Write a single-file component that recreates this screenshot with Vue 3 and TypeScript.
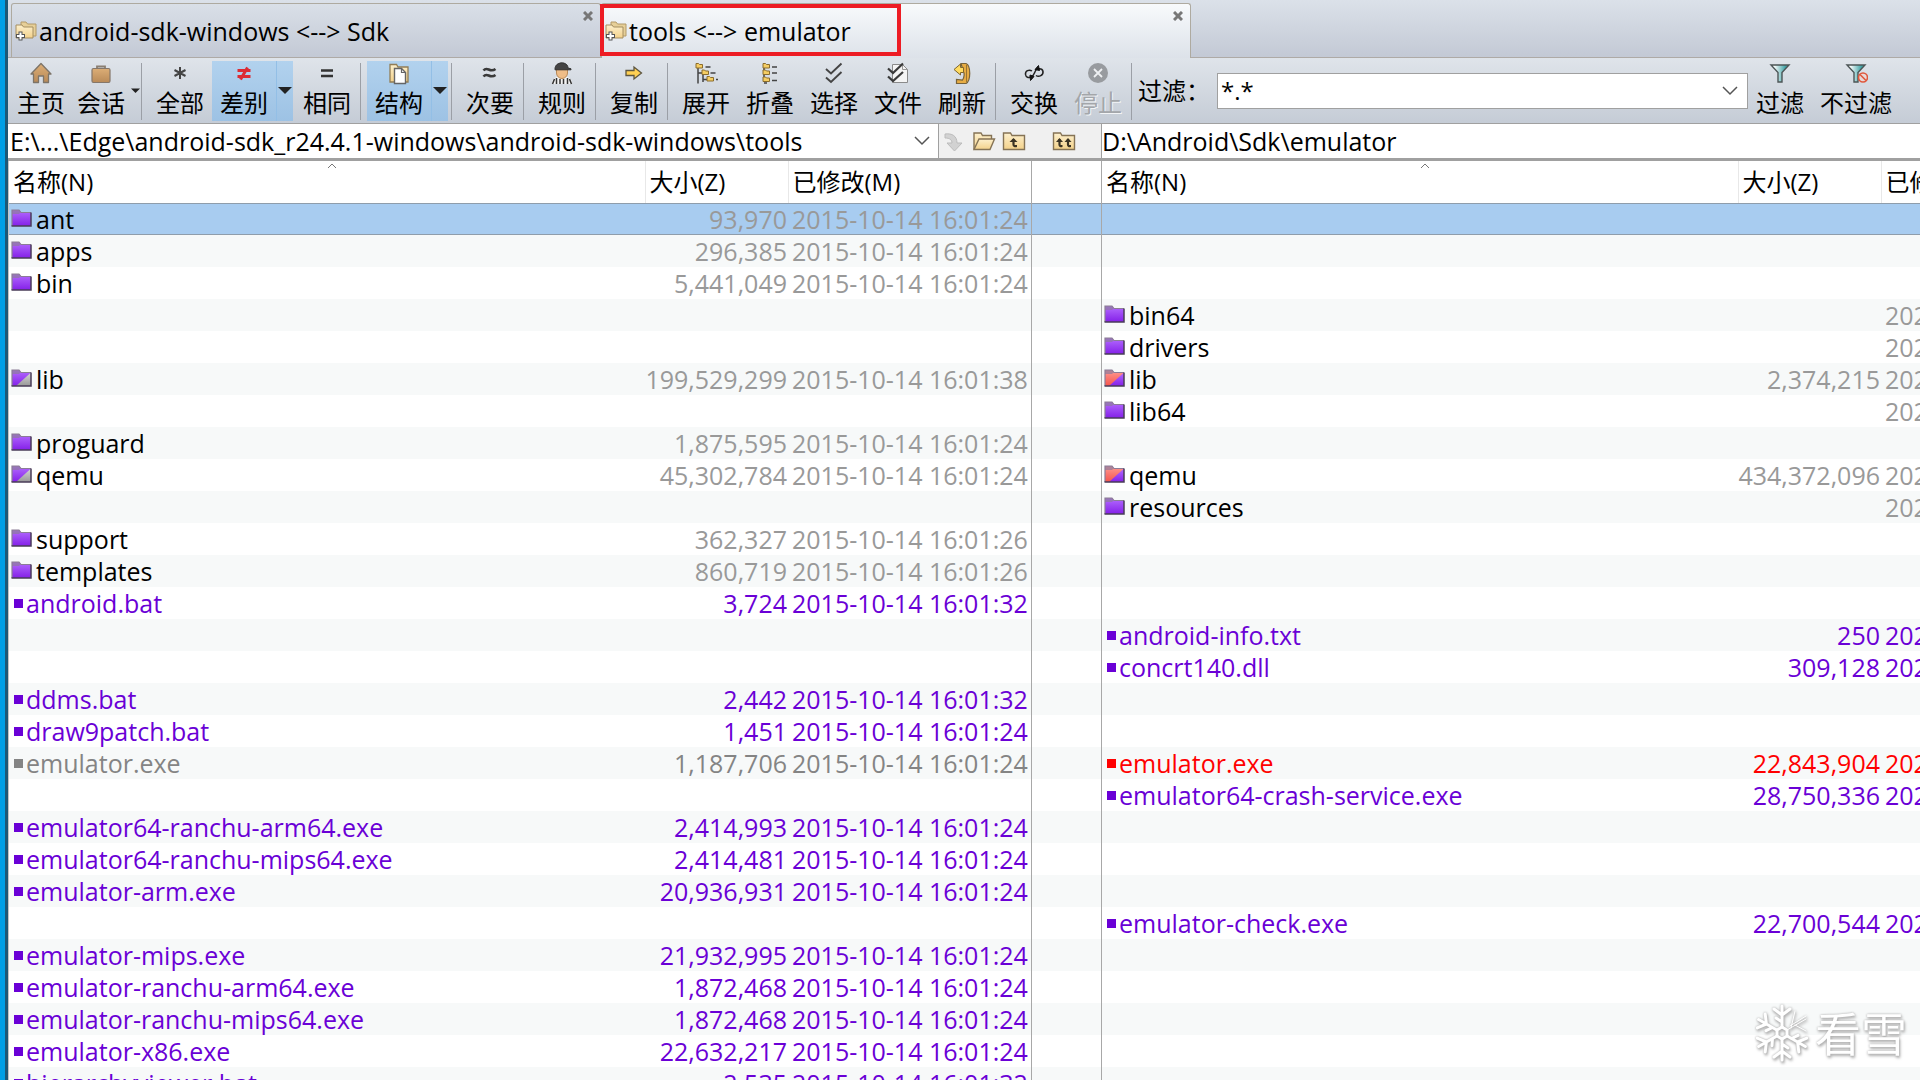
<script setup lang="ts">
import { ref } from 'vue'

type Kind = 'folder' | 'folder-gray' | 'folder-red' | 'file'
interface Entry {
  name: string
  kind: Kind
  tone: 'dir' | 'only' | 'old' | 'new'
  size?: string
  date: string
}
interface Row {
  left?: Entry
  right?: Entry
}
interface Tool {
  label: string
  icon: string
  active?: boolean
  arrow?: boolean
  disabled?: boolean
  compact?: boolean
}

const dir = (name: string, date: string, size?: string, kind: Kind = 'folder'): Entry => ({ name, kind, tone: 'dir', size, date })
const file = (name: string, size: string, date: string, tone: Entry['tone'] = 'only'): Entry => ({ name, kind: 'file', tone, size, date })

const t24 = '2015-10-14 16:01:24'
const t26 = '2015-10-14 16:01:26'
const t32 = '2015-10-14 16:01:32'
const t38 = '2015-10-14 16:01:38'

const rows: Row[] = [
  { left: dir('ant', t24, '93,970') },
  { left: dir('apps', t24, '296,385') },
  { left: dir('bin', t24, '5,441,049') },
  { right: dir('bin64', '202') },
  { right: dir('drivers', '202') },
  { left: dir('lib', t38, '199,529,299', 'folder-gray'), right: dir('lib', '202', '2,374,215', 'folder-red') },
  { right: dir('lib64', '202') },
  { left: dir('proguard', t24, '1,875,595') },
  { left: dir('qemu', t24, '45,302,784', 'folder-gray'), right: dir('qemu', '202', '434,372,096', 'folder-red') },
  { right: dir('resources', '202') },
  { left: dir('support', t26, '362,327') },
  { left: dir('templates', t26, '860,719') },
  { left: file('android.bat', '3,724', t32) },
  { right: file('android-info.txt', '250', '202') },
  { right: file('concrt140.dll', '309,128', '202') },
  { left: file('ddms.bat', '2,442', t32) },
  { left: file('draw9patch.bat', '1,451', t24) },
  { left: file('emulator.exe', '1,187,706', t24, 'old'), right: file('emulator.exe', '22,843,904', '202', 'new') },
  { right: file('emulator64-crash-service.exe', '28,750,336', '202') },
  { left: file('emulator64-ranchu-arm64.exe', '2,414,993', t24) },
  { left: file('emulator64-ranchu-mips64.exe', '2,414,481', t24) },
  { left: file('emulator-arm.exe', '20,936,931', t24) },
  { right: file('emulator-check.exe', '22,700,544', '202') },
  { left: file('emulator-mips.exe', '21,932,995', t24) },
  { left: file('emulator-ranchu-arm64.exe', '1,872,468', t24) },
  { left: file('emulator-ranchu-mips64.exe', '1,872,468', t24) },
  { left: file('emulator-x86.exe', '22,632,217', t24) },
  { left: file('hierarchyviewer.bat', '2,535', t32) },
]

const icons: Record<string, string> = {
  home: '<path d="M12 2.500 22 13h-2.500v8.500H14.500V15h-5v6.500H4.500V13H2z" fill="url(#brown)" stroke="#7d7468" stroke-width="1.300" stroke-linejoin="round"/>',
  bag: '<path d="M8 8V5.500h8V8" fill="none" stroke="#8a7f72" stroke-width="1.800"/><rect x="3" y="7.500" width="18" height="14" rx="1.500" fill="url(#brown)" stroke="#85776a" stroke-width="1.200"/>',
  all: '<path d="M12 6v12M6.500 9l11 6M17.500 9l-11 6" stroke="#444" stroke-width="2"/>',
  diff: '<path d="M5.500 9.500h13M5.500 15.500h13M15.500 6.500l-7 12" stroke="#dc2b33" stroke-width="3"/>',
  same: '<path d="M6 9.500h12M6 15h12" stroke="#333" stroke-width="2.600"/>',
  struct: '<path d="M3 21V3.500h6.500L11 6h10v15z" fill="url(#cream)" stroke="#927d55" stroke-width="1.300"/><path d="M7.500 7.500h7l4 4v11h-11z" fill="#fff" stroke="#666" stroke-width="1.400"/><path d="M14.500 7.500v4h4" fill="none" stroke="#666" stroke-width="1.200"/>',
  minor: '<path d="M5.500 9.500c4-5 6 3 12-1.500M5.500 15.500c4-5 6 3 12-1.500" fill="none" stroke="#3a3a3a" stroke-width="2.600"/>',
  rules: '<path d="M2 23c0-5 3-7 6-7h8c3 0 6 2 6 7" fill="#f4f4f4"/><path d="M2.500 23l2-5M6.500 23v-6M10 23v-5M13.500 23v-5M17.500 23v-6M21.500 23l-2-5" stroke="#333" stroke-width="1.500"/><path d="M6.500 8h11v4c0 3-2.500 5.500-5.500 5.500S6.500 15 6.500 12z" fill="#efbd88" stroke="#b98a58"/><path d="M5 8c0-8 13-8 13-1l3 .8v1H5z" fill="#444" stroke="#333"/>',
  copy: '<path d="M4 9.500h8V6l7.500 6-7.500 6v-3.500H4z" fill="#ffd052" stroke="#5c5540" stroke-width="1.300"/>',
  expand: '<path d="M4 5v17.500M9 12v9M4 12h5M9 18.500h5M11.500 6h5M16.500 12h5M22 18.500h2" stroke="#444" stroke-width="1.500"/><g fill="#f5cd62" stroke="#8a6c2c"><path d="M2 2.500h2.500l1 1h3v3.500H2zM8 9h2.500l1 1h3v3.500H8zM13 15.500h2.500l1 1h3V20H13z"/></g>',
  collapse: '<path d="M6 5v16M6 22h3M14 6h5M14 12h5M14 19.500h5" stroke="#444" stroke-width="1.500"/><g fill="#f5cd62" stroke="#8a6c2c"><path d="M5 2.500h2.500l1 1h3v3.500H5zM5 9h2.500l1 1h3v3.500H5zM5 16h2.500l1 1h3v3.500H5z"/></g>',
  select: '<path d="M4 8l5 4.500L19.500 2.500M4 16.500l5 4.500 10.500-10" fill="none" stroke="#444" stroke-width="1.900"/>',
  files: '<path d="M6.500 3.500h10l5 5v13h-15z" fill="#f4f4f4" stroke="#8a8a8a"/><path d="M16.500 3.500v5h5" fill="none" stroke="#999"/><path d="M2 7.500l5 4.500L17 2.500M2 15.500l5 4.500 10-9" fill="none" stroke="#3a3a3a" stroke-width="2.200"/>',
  refresh: '<path d="M11 2.500h5c5 2 5 17 0 20H6.500v-4l6 .5c2-3 2-7 1-8z" fill="#e7ac43" stroke="#77633b" stroke-width="1.200"/><path d="M4 8.500L10.500 3v3.500h3v5h-3V14z" fill="#ffdb61" stroke="#80662c"/><path d="M16.500 4v17" stroke="#9a7430"/>',
  swap: '<path d="M10 10c-3-2-7 0-6.500 3.500.5 3 3 3.500 5.500 2.500 4-1.500 3-6 6-8M14 14.500c3 2 7.500-.5 7-4-.5-2.500-3-3-5.500-2.500" fill="none" stroke="#222" stroke-width="1.500"/><path d="M8 14l4 1.500-3.500 4zM16.500 4.500L13 8.500l4.500 1z" fill="#111" stroke="#111"/>',
  stop: '<circle cx="12" cy="12" r="10" fill="#989b9f"/><path d="M8 8l8 8M16 8l-8 8" stroke="#eef0f2" stroke-width="1.800"/>',
  filter: '<path d="M3 4h18l-7 7.500V21h-4v-9.500z" fill="url(#teal)" stroke="#4c5556" stroke-width="1.400"/>',
  nofilter: '<path d="M3 4h18l-7 7.500V21h-4v-9.500z" fill="url(#teal)" stroke="#4c5556" stroke-width="1.400"/><circle cx="19" cy="16.500" r="4.500" fill="#e8d9d8" stroke="#e0583c" stroke-width="1.600"/><path d="M16 13.500l6 6" stroke="#e0583c" stroke-width="1.600"/>',
  go: '<path d="M3 5c7-1 12 2 12 9h5l-7.500 8L5 14h5c0-3-2-5-7-5z" fill="#d2d2d2" stroke="#bcbcbc"/>',
  open: '<path d="M2 20.500V4h7l1.500 2.500h9V10" fill="url(#cream)" stroke="#857355" stroke-width="1.400"/><path d="M2 20.500L7 10h15.500L18 20.500z" fill="url(#cream)" stroke="#857355" stroke-width="1.400"/>',
  up: '<path d="M1.500 20.500V4h7L10 6.500h12.500v14z" fill="url(#cream)" stroke="#857355" stroke-width="1.400"/><path d="M11.500 10v5.500c0 2 2 1.500 3.500 1.500" fill="none" stroke="#3a3324" stroke-width="2.200"/><path d="M7.500 13l4-4 4 4z" fill="#3a3324"/>',
  upup: '<path d="M1.500 20.500V4h7L10 6.500h12.500v14z" fill="url(#cream)" stroke="#857355" stroke-width="1.400"/><path d="M7.500 10v5.500c0 2 1.500 1.500 3 1.500M16 10v5.500c0 2 1.500 1.500 3 1.500" fill="none" stroke="#3a3324" stroke-width="2.200"/><path d="M4 13l3.500-4 3.500 4zM12.500 13L16 9l3.500 4z" fill="#3a3324"/>',
}

const groups: Tool[][] = [
  [
    { label: '主页', icon: 'home', compact: true },
    { label: '会话', icon: 'bag', compact: true, arrow: true },
  ],
  [
    { label: '全部', icon: 'all' },
    { label: '差别', icon: 'diff', active: true, arrow: true },
    { label: '相同', icon: 'same' },
  ],
  [{ label: '结构', icon: 'struct', active: true, arrow: true }],
  [{ label: '次要', icon: 'minor' }],
  [{ label: '规则', icon: 'rules' }],
  [{ label: '复制', icon: 'copy' }],
  [
    { label: '展开', icon: 'expand' },
    { label: '折叠', icon: 'collapse' },
    { label: '选择', icon: 'select' },
    { label: '文件', icon: 'files' },
    { label: '刷新', icon: 'refresh' },
  ],
  [
    { label: '交换', icon: 'swap' },
    { label: '停止', icon: 'stop', disabled: true },
  ],
]

const tabs = [
  { title: 'android-sdk-windows <--> Sdk', active: false },
  { title: 'tools <--> emulator', active: true },
]

const sides: ('left' | 'right')[] = ['left', 'right']
const selected = ref(0)
const filter = ref('*.*')
const leftPath = ref('E:\\...\\Edge\\android-sdk_r24.4.1-windows\\android-sdk-windows\\tools')
const rightPath = ref('D:\\Android\\Sdk\\emulator')

const folderFill = (k: Kind) => (k === 'folder-red' ? 'url(#red)' : 'url(#violet)')
const cornerFill = (k: Kind) => (k === 'folder-red' ? 'url(#violet)' : 'url(#silver)')
</script>

<template>
  <div class="app">
    <svg class="defs" aria-hidden="true">
      <defs>
        <linearGradient id="brown" x1="0" y1="0" x2="0" y2="1"><stop offset="0" stop-color="#dcae76" /><stop offset="1" stop-color="#b98a58" /></linearGradient>
        <linearGradient id="cream" x1="0" y1="0" x2="0" y2="1"><stop offset="0" stop-color="#fdf0cd" /><stop offset="1" stop-color="#f3d18a" /></linearGradient>
        <linearGradient id="teal" x1="0" y1="0" x2="1" y2="0"><stop offset="0.200" stop-color="#f6fbfb" /><stop offset="0.800" stop-color="#3fa3a6" /></linearGradient>
        <linearGradient id="violet" x1="0" y1="0" x2="0" y2="1"><stop offset="0" stop-color="#b46cff" /><stop offset="1" stop-color="#8420e8" /></linearGradient>
        <linearGradient id="red" x1="0" y1="0" x2="0" y2="1"><stop offset="0" stop-color="#ff9a92" /><stop offset="1" stop-color="#f5544c" /></linearGradient>
        <linearGradient id="silver" x1="0" y1="0" x2="0" y2="1"><stop offset="0" stop-color="#d8d8d8" /><stop offset="1" stop-color="#989898" /></linearGradient>
      </defs>
    </svg>

    <div class="edge"></div>
    <main class="window">
      <nav class="tabs">
        <div v-for="tab in tabs" :key="tab.title" class="tab" :class="{ current: tab.active }">
          <button class="tab-main" type="button">
            <svg width="22" height="22" viewBox="0 0 22 22" aria-hidden="true">
              <path d="M6 14V2h5l1.500 2H21v12h-3" fill="#e6cf98" stroke="#b39a68" />
              <path d="M1 18V5h6l1.500 2H18v11z" fill="url(#cream)" stroke="#a58e60" />
              <path d="M5.500 11.500v9M1 16h9" stroke="#555" stroke-width="4" />
              <path d="M5.500 12.500v7M2 16h7" stroke="#fff" stroke-width="2" />
            </svg>
            <span>{{ tab.title }}</span>
          </button>
          <button class="close" type="button" aria-label="关闭">
            <svg width="10" height="10" viewBox="0 0 10 10"><path d="M1 1l8 8M9 1L1 9" stroke="#777" stroke-width="3" /></svg>
          </button>
          <span v-if="tab.active" class="mark"></span>
        </div>
      </nav>

      <div class="toolbar">
        <template v-for="(group, g) in groups" :key="g">
          <div v-for="tool in group" :key="tool.label" class="tool" :class="{ active: tool.active, compact: tool.compact }">
            <button class="tool-btn" type="button" :disabled="tool.disabled">
              <svg width="24" height="24" viewBox="0 0 24 24" aria-hidden="true" v-html="icons[tool.icon]"></svg>
              <span>{{ tool.label }}</span>
            </button>
            <button v-if="tool.arrow" class="drop" type="button" :aria-label="tool.label + ' ▾'">
              <svg width="14" height="8" viewBox="0 0 14 8"><path d="M0 0h14L7 7z" fill="#222" /></svg>
            </button>
          </div>
          <span class="sep"></span>
        </template>
        <label class="filter-label" for="filter">过滤：</label>
        <div class="combo">
          <input id="filter" v-model="filter" type="text" />
          <svg width="16" height="10" viewBox="0 0 16 10"><path d="M1 1l7 7 7-7" fill="none" stroke="#555" stroke-width="1.500" /></svg>
        </div>
        <div class="tool">
          <button class="tool-btn" type="button">
            <svg width="24" height="24" viewBox="0 0 24 24" aria-hidden="true" v-html="icons.filter"></svg>
            <span>过滤</span>
          </button>
        </div>
        <div class="tool wide">
          <button class="tool-btn" type="button">
            <svg width="24" height="24" viewBox="0 0 24 24" aria-hidden="true" v-html="icons.nofilter"></svg>
            <span>不过滤</span>
          </button>
        </div>
      </div>

      <div class="compare paths">
        <div class="path-left">
          <div class="path">
            <input v-model="leftPath" type="text" aria-label="左侧路径" />
            <svg width="16" height="10" viewBox="0 0 16 10"><path d="M1 1l7 7 7-7" fill="none" stroke="#555" stroke-width="1.500" /></svg>
          </div>
          <div class="path-tools">
            <button v-for="name in ['go', 'open', 'up', 'upup']" :key="name" type="button" :class="name" :aria-label="name">
              <svg width="24" height="24" viewBox="0 0 24 24" v-html="icons[name]"></svg>
            </button>
          </div>
        </div>
        <div class="path path-right">
          <input v-model="rightPath" type="text" aria-label="右侧路径" />
        </div>
      </div>

      <div class="compare panes">
        <template v-for="side in sides" :key="side">
          <div v-if="side === 'right'" class="gutter">
            <div class="gutter-head"></div>
            <div v-for="(_, i) in rows" :key="i" class="gutter-row" :class="{ selected: i === selected }"></div>
          </div>
          <div class="pane" :class="side">
            <table>
              <colgroup>
                <col />
                <col class="c-size" />
                <col class="c-date" />
              </colgroup>
              <thead>
                <tr>
                  <th scope="col">
                    名称(N)
                    <svg class="sort" width="10" height="6" viewBox="0 0 10 6"><path d="M1 5l4-4 4 4" fill="none" stroke="#777" /></svg>
                  </th>
                  <th scope="col">大小(Z)</th>
                  <th scope="col">已修改(M)</th>
                </tr>
              </thead>
              <tbody>
                <tr v-for="(row, i) in rows" :key="i" :class="[row[side]?.tone, { selected: i === selected }]" @click="selected = i">
                  <td>
                    <div v-if="row[side]" class="name">
                      <span v-if="row[side]!.kind === 'file'" class="dot"></span>
                      <svg v-else width="21" height="18" viewBox="0 0 21 18" aria-hidden="true">
                        <path d="M1 17V1h7l2 2.500h10V17z" :fill="folderFill(row[side]!.kind)" />
                        <path v-if="row[side]!.kind !== 'folder'" d="M20 3.500V17H5z" :fill="cornerFill(row[side]!.kind)" />
                        <path d="M1 1h7l1.500 2.500L8 5H1z" fill="#8d7a9c" fill-opacity="0.700" />
                        <path d="M1 17V1h7l2 2.500h10" fill="none" stroke="#8b7c96" stroke-width="1.200" />
                        <path d="M20 3.500V17H0.500" fill="none" stroke="#4a3d58" stroke-width="1.500" />
                      </svg>
                      <span>{{ row[side]!.name }}</span>
                    </div>
                  </td>
                  <td class="size">{{ row[side]?.size }}</td>
                  <td class="date">{{ row[side]?.date }}</td>
                </tr>
              </tbody>
            </table>
          </div>
        </template>
      </div>
    </main>

    <div class="watermark">
      <svg width="52" height="58" viewBox="-26 -29 52 58" aria-hidden="true">
        <g fill="none" stroke="#fff" stroke-width="3" stroke-linecap="round">
          <path d="M0-6L5-3V3L0 6-5 3V-3z" />
          <path v-for="a in [0, 120, 180, 240, 300]" :key="a" :transform="`rotate(${a})`" d="M0-6V-27M-8-24L0-18 8-24M-6-15L0-11" />
          <path d="M5-3L24-14M8-7L24-17M9-5L13-22M13-8L24-2" stroke-width="1" />
        </g>
      </svg>
      <span>看雪</span>
    </div>
  </div>
</template>

<style>
html,
body {
  margin: 0;
  overflow: hidden;
}
</style>

<style scoped>
.app {
  position: relative;
  display: flex;
  height: 100vh;
  overflow: hidden;
  background: #fff;
  color: #000;
  font-family: "Open Sans", "Noto Sans CJK SC", sans-serif;
  font-size: 25px;
  line-height: 32px;
}
.defs {
  position: absolute;
  width: 0;
  height: 0;
}
button,
input {
  margin: 0;
  padding: 0;
  border: 0;
  background: none;
  color: inherit;
  font: inherit;
}
.edge {
  flex: none;
  box-sizing: border-box;
  width: 8px;
  background: #009fe6;
  border-right: 3px solid #1d5876;
}
.window {
  flex: 1;
  min-width: 0;
}

.tabs {
  display: flex;
  box-sizing: border-box;
  height: 58px;
  padding: 3px 0 0 3px;
  background: linear-gradient(#dbe1e9, #c3c9d5);
  border-bottom: 1px solid #aeaaa6;
}
.tab {
  position: relative;
  display: flex;
  box-sizing: border-box;
  width: 590px;
  border: 1px solid #aeaaa0;
  border-bottom: 0;
  border-radius: 3px 3px 0 0;
}
.tab.current {
  height: 55px;
  background: linear-gradient(#f8fafc, #dde2e9);
}
.tab-main {
  display: flex;
  flex: 1;
  align-items: center;
  gap: 2px;
  padding-left: 3px;
  text-align: left;
  white-space: pre;
}
.close {
  display: flex;
  align-items: flex-start;
  padding: 7px 7px 0 0;
}
.mark {
  position: absolute;
  top: 0;
  left: -2px;
  box-sizing: border-box;
  width: 301px;
  height: 52px;
  border: 4px solid #ed1c24;
  pointer-events: none;
}

.toolbar {
  display: flex;
  align-items: center;
  box-sizing: border-box;
  height: 66px;
  padding: 1px 20px 0 3px;
  background: linear-gradient(#dfe4ea, #c5ccd6);
  border-bottom: 1px solid #a0a0a0;
  font-size: 24px;
}
.tool {
  display: flex;
  flex: none;
  box-sizing: border-box;
  height: 60px;
}
.tool-btn {
  display: flex;
  flex-direction: column;
  align-items: center;
  width: 64px;
  white-space: nowrap;
}
.tool-btn span {
  line-height: 36px;
}
.tool-btn:disabled {
  color: #a3a6aa;
  text-shadow: 1px 1px 0 #f2f4f6;
}
.compact .tool-btn {
  width: 60px;
}
.wide .tool-btn {
  width: 88px;
}
.drop {
  display: flex;
  align-items: center;
  justify-content: center;
  width: 9px;
}
.active {
  margin-right: 2px;
  background: linear-gradient(#b2d2ee, #9dc2e4);
}
.active .drop {
  box-sizing: border-box;
  width: 17px;
  border-left: 1px solid #93bfe6;
}
.sep {
  flex: none;
  width: 1px;
  height: 57px;
  margin: 0 6px 0 1px;
  background: #9b9fa6;
}
.filter-label {
  flex: none;
  width: 79px;
  white-space: nowrap;
}
.combo {
  display: flex;
  flex: 1;
  align-items: center;
  box-sizing: border-box;
  min-width: 0;
  height: 36px;
  padding: 0 9px 0 3px;
  background: #fff;
  border: 1px solid #a0a0a0;
}
.combo input,
.path input {
  flex: 1;
  min-width: 0;
  outline: 0;
}

.compare {
  display: grid;
  grid-template-columns: minmax(0, 1023fr) 71px minmax(0, 818fr);
}
.paths {
  height: 34px;
  border-bottom: 3px solid #a0a0a0;
  background: #f0f0f0;
}
.path-left {
  display: flex;
  grid-column: span 2;
}
.path {
  display: flex;
  flex: 1;
  align-items: center;
  min-width: 0;
  padding: 0 8px 0 2px;
  background: #fff;
  border-right: 1px solid #a0a0a0;
}
.path-tools {
  display: flex;
  flex: none;
  align-items: center;
  box-sizing: border-box;
  width: 163px;
  border-right: 1px solid #a0a0a0;
}
.path-tools button {
  display: flex;
  justify-content: center;
  width: 30px;
}
.path-tools .upup {
  margin-left: 20px;
}
.path-right {
  padding: 0;
  border: 0;
}

.pane {
  min-width: 0;
  overflow: hidden;
}
.left {
  box-sizing: border-box;
  border-left: 1px solid #c4c4c4;
}
table {
  width: 100%;
  table-layout: fixed;
  border-collapse: collapse;
}
.right table {
  width: calc(100% + 204px);
}
.c-size {
  width: 143px;
}
.c-date {
  width: 243px;
}
th {
  position: relative;
  box-sizing: border-box;
  height: 42px;
  padding: 0 0 0 4px;
  border-right: 1px solid #e8e8e8;
  font-size: 24px;
  font-weight: 400;
  text-align: left;
  white-space: nowrap;
}
th:last-child {
  border-right: 0;
}
.sort {
  position: absolute;
  top: 2px;
  left: 50%;
}
td {
  box-sizing: border-box;
  height: 32px;
  padding: 0;
  white-space: nowrap;
}
tbody tr:nth-child(even),
.gutter-row:nth-child(odd) {
  background: #f7f9f9;
}
tbody .selected,
.gutter .selected {
  background: #a8ccf0;
  box-shadow: inset 0 1px 0 #8f9dab, inset 0 -1px 0 #8f9dab;
}
.name {
  display: flex;
  align-items: center;
  gap: 4px;
  padding-left: 2px;
}
.name svg {
  margin-bottom: 2px;
}
.dot {
  width: 9px;
  height: 9px;
  margin: 0 -1px 0 3px;
  background: currentColor;
}
.size {
  padding-right: 1px;
  text-align: right;
}
.date {
  padding-left: 4px;
}
.dir .size,
.dir .date {
  color: #999;
}
.only {
  color: #6a00d6;
}
.old {
  color: #848484;
}
.new {
  color: #f00;
}
.gutter {
  box-sizing: border-box;
  border-right: 1px solid #a8a8a8;
  border-left: 1px solid #a8a8a8;
}
.gutter-head {
  height: 42px;
}
.gutter-row {
  height: 32px;
}

.watermark {
  position: absolute;
  right: 13px;
  bottom: 17px;
  display: flex;
  align-items: center;
  gap: 7px;
  color: #fff;
  font-size: 46px;
  line-height: 60px;
  filter: drop-shadow(0 0 1px #aaa) drop-shadow(1px 2px 1px #bbb);
  pointer-events: none;
}
</style>
